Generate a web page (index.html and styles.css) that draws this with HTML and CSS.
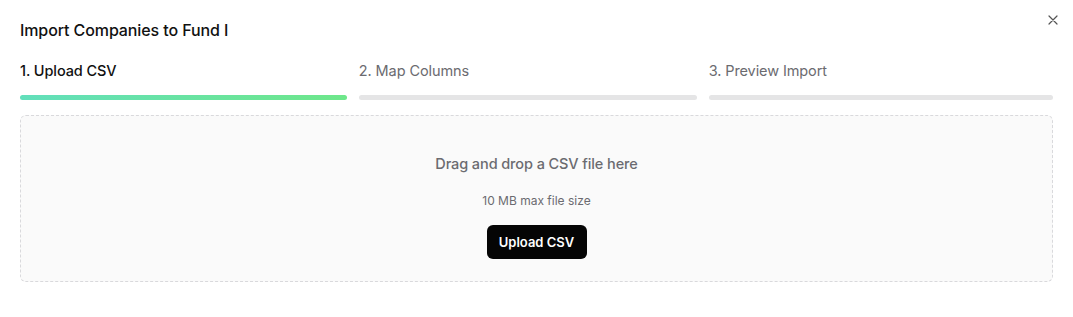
FILE: index.html
```html
<!DOCTYPE html>
<html lang="en">
<head>
  <meta charset="UTF-8" />
  <title>Import Companies to Fund I</title>
  <meta name="viewport" content="width=device-width, initial-scale=1.0" />
  <link rel="stylesheet" href="styles.css">
</head>
<body>
  <div class="modal">
    <div class="modal-header">
      <h1>Import Companies to Fund I</h1>
      <button class="close-btn" aria-label="Close">
        <svg width="10" height="10" viewBox="0 0 10 10">
          <path d="M1 1L9 9M9 1L1 9" stroke="#555" stroke-width="1.2" stroke-linecap="round" />
        </svg>
      </button>
    </div>

    <div class="steps">
      <div class="step active">
        <span class="step-label">1. Upload CSV</span>
        <div class="step-bar"></div>
      </div>
      <div class="step">
        <span class="step-label">2. Map Columns</span>
        <div class="step-bar"></div>
      </div>
      <div class="step">
        <span class="step-label">3. Preview Import</span>
        <div class="step-bar"></div>
      </div>
    </div>

    <div class="dropzone">
      <p class="drop-title">Drag and drop a CSV file here</p>
      <p class="drop-hint">10 MB max file size</p>
      <button class="upload-btn">Upload CSV</button>
    </div>
  </div>
</body>
</html>
```

FILE: styles.css
```css
body {
  margin: 0;
  background: #fff;
  color: #111;
  font-family: Inter, "Liberation Sans", sans-serif;
}
.modal {
  padding: 14px 20px 0 20px;
}
.modal-header {
  display: flex;
  justify-content: space-between;
  align-items: flex-start;
}
h1 {
  font-size: 16px;
  font-weight: 500;
  margin: 6px 0 0 0;
  letter-spacing: -0.1px;
}
.close-btn {
  background: none;
  border: none;
  padding: 0;
  margin: 1px -5px 0 0;
  width: 10px;
  height: 10px;
  cursor: pointer;
  display: flex;
}
.steps {
  display: grid;
  grid-template-columns: 327fr 338fr 344fr;
  gap: 11.5px;
  margin-top: 22px;
}
.step-label {
  display: block;
  font-size: 14.5px;
  color: #6b6b70;
  line-height: 18px;
  letter-spacing: -0.1px;
}
.step.active .step-label {
  color: #111;
  font-weight: 500;
}
.step-bar {
  height: 5px;
  margin-top: 15px;
  border-radius: 3px;
  background: #e5e5e6;
}
.step.active .step-bar {
  background: linear-gradient(90deg, #62dfbb, #6ee78a);
}
.dropzone {
  margin-top: 15px;
  height: 165px;
  border: 1px dashed #d9d9dc;
  border-radius: 6px;
  background: #fafafa;
  display: flex;
  flex-direction: column;
  align-items: center;
}
.drop-title {
  margin: 39px 0 0 0;
  font-size: 14.5px;
  font-weight: 500;
  color: #6b6b70;
  letter-spacing: -0.1px;
}
.drop-hint {
  margin: 21px 0 0 0;
  font-size: 12px;
  color: #6b6b70;
}
.upload-btn {
  margin-top: 17px;
  width: 100px;
  height: 34px;
  border: none;
  border-radius: 6px;
  background: #050505;
  color: #fff;
  font-family: inherit;
  font-size: 13px;
  font-weight: 600;
  cursor: pointer;
}
```
